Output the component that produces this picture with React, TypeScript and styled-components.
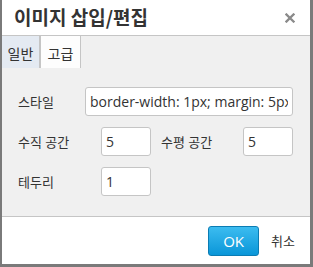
import React, { useState } from 'react';
import styled, { createGlobalStyle } from 'styled-components';

const GlobalStyle = createGlobalStyle`
  html, body {
    margin: 0;
    padding: 0;
    background: #7a7a7a;
  }
  body {
    font-family: "Open Sans", "Noto Sans CJK KR", sans-serif;
    color: #333;
  }
`;

const Dialog = styled.div`
  margin-left: 2px;
  width: 308px;
  height: 264px;
  background: #fff;
  display: flex;
  flex-direction: column;
`;

const Header = styled.div`
  height: 35px;
  border-bottom: 1px solid #c5c5c5;
  display: flex;
  align-items: center;
  justify-content: space-between;
  padding: 0 14px 0 12px;
`;

const Title = styled.h1`
  margin: 0;
  font-size: 19px;
  font-weight: 700;
  color: #333;
  font-family: "Noto Sans CJK KR", "Open Sans", sans-serif;
  line-height: 1;
  padding-bottom: 2px;
`;

const Close = styled.button`
  border: 0;
  background: none;
  padding: 0;
  width: 12px;
  height: 12px;
  display: flex;
  align-items: center;
  justify-content: center;
  cursor: pointer;
`;

const Tabs = styled.div`
  height: 32px;
  display: flex;
  background: #f0f0f0;
`;

const Tab = styled.div<{ active?: boolean; first?: boolean }>`
  display: flex;
  align-items: center;
  justify-content: center;
  width: ${p => (p.first ? '37px' : '39px')};
  font-size: 14px;
  background: ${p => (p.active ? '#fdfdfd' : '#e4eaf2')};
  border-left: ${p => (p.first ? 'none' : '1px solid #c5c5c5')};
  border-right: 1px solid #c5c5c5;
  color: #333;
  cursor: pointer;
  padding-top: 2px;
`;

const Body = styled.div`
  flex: 1;
  background: #f0f0f0;
  padding: 19px 17px 0 16px;
  display: flex;
  flex-direction: column;
  gap: 11px;
  border-bottom: 1px solid #c5c5c5;
`;

const Row = styled.div`
  display: flex;
  align-items: center;
`;

const Label = styled.label<{ w: number; indent?: number }>`
  box-sizing: border-box;
  width: ${p => p.w}px;
  padding-left: ${p => p.indent ?? 0}px;
  font-size: 13px;
  color: #333;
  flex-shrink: 0;
`;

const Input = styled.input<{ w?: number }>`
  box-sizing: border-box;
  height: 29px;
  width: ${p => (p.w ? `${p.w}px` : 'auto')};
  flex: ${p => (p.w ? '0 0 auto' : '1')};
  min-width: 0;
  border: 1px solid #c5c5c5;
  border-radius: 3px;
  background: #fff;
  padding: 0 4px;
  font-family: "Open Sans", sans-serif;
  font-size: 14px;
  color: #333;
  outline: none;
`;

const Footer = styled.div`
  height: 47px;
  display: flex;
  align-items: center;
  justify-content: flex-end;
  padding-right: 15px;
  gap: 12px;
`;

const OkButton = styled.button`
  box-sizing: border-box;
  width: 51px;
  height: 30px;
  border: 1px solid #0b7cb3;
  border-radius: 3px;
  background: linear-gradient(to bottom, #3cbcf0, #0a96d8);
  color: #fff;
  font-family: "Open Sans", sans-serif;
  font-size: 15px;
  cursor: pointer;
  padding: 0;
`;

const CancelButton = styled.button`
  border: 0;
  background: none;
  padding: 0;
  font-family: "Noto Sans CJK KR", sans-serif;
  font-size: 13px;
  color: #333;
  cursor: pointer;
`;

export default function App() {
  const [style, setStyle] = useState('border-width: 1px; margin: 5px;');
  const [vspace, setVspace] = useState('5');
  const [hspace, setHspace] = useState('5');
  const [border, setBorder] = useState('1');

  return (
    <>
      <GlobalStyle />
      <Dialog>
        <Header>
          <Title>이미지 삽입/편집</Title>
          <Close aria-label="닫기">
            <svg width="10" height="10" viewBox="0 0 10 10">
              <path d="M1.5 1.5l7 7M8.5 1.5l-7 7" stroke="#8a8a8a" strokeWidth="2.3" strokeLinecap="square" />
            </svg>
          </Close>
        </Header>
        <Tabs>
          <Tab first>일반</Tab>
          <Tab active>고급</Tab>
        </Tabs>
        <Body>
          <Row>
            <Label w={67}>스타일</Label>
            <Input value={style} onChange={e => setStyle(e.target.value)} />
          </Row>
          <Row>
            <Label w={83}>수직 공간</Label>
            <Input w={50} value={vspace} onChange={e => setVspace(e.target.value)} />
            <Label w={92} indent={10}>수평 공간</Label>
            <Input w={50} value={hspace} onChange={e => setHspace(e.target.value)} />
          </Row>
          <Row>
            <Label w={83}>테두리</Label>
            <Input w={50} value={border} onChange={e => setBorder(e.target.value)} />
          </Row>
        </Body>
        <Footer>
          <OkButton>OK</OkButton>
          <CancelButton>취소</CancelButton>
        </Footer>
      </Dialog>
    </>
  );
}
